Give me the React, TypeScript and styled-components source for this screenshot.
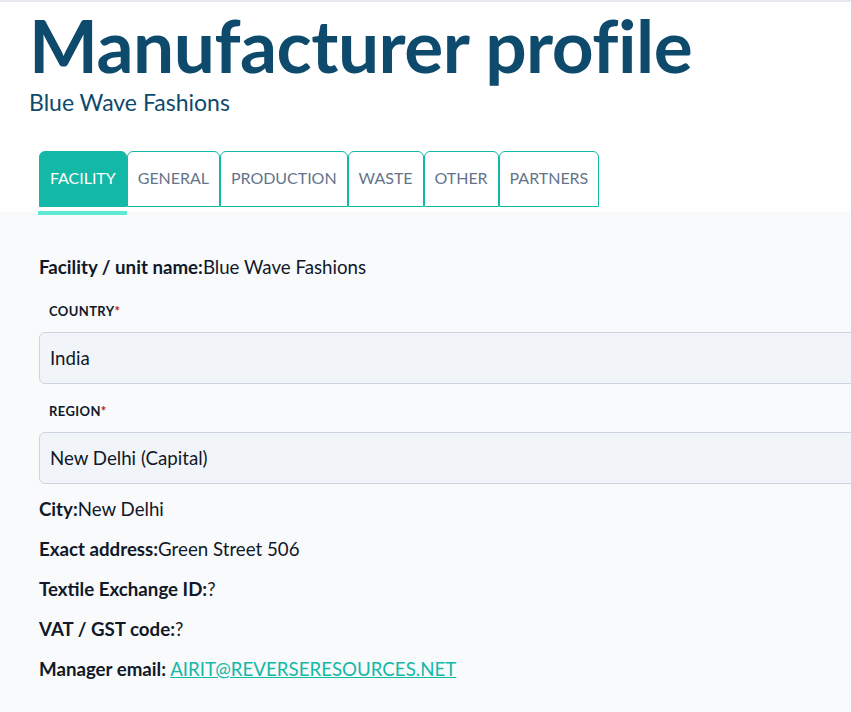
import React from "react";
import styled, { createGlobalStyle } from "styled-components";

const Global = createGlobalStyle`
  html, body { margin: 0; padding: 0; background: #ffffff; overflow: hidden; }
  body { font-family: "Lato", "Noto Sans", sans-serif; }
  * { box-sizing: border-box; }
`;

const Page = styled.div`
  width: 851px;
  min-height: 712px;
  border-top: 2px solid #e6eaf0;
  display: flex;
  flex-direction: column;
  overflow: hidden;
`;

const Header = styled.header`
  padding: 3px 0 0 29px;
`;

const Title = styled.h1`
  margin: 0;
  font-size: 73px;
  line-height: 80px;
  font-weight: 700;
  color: #0e4a6c;
  letter-spacing: -0.5px;
`;

const Subtitle = styled.div`
  font-size: 23px;
  line-height: 26px;
  color: #0e4a6c;
  margin-top: 4px;
`;

const TabBar = styled.nav`
  display: flex;
  padding: 36px 0 0 39px;
`;

const TabWrap = styled.div`
  display: flex;
  flex-direction: column;
`;

const Tab = styled.button<{ $active?: boolean }>`
  height: 56px;
  padding: 0 10px 3px;
  border: 1px solid #14b8a6;
  border-radius: 6px 6px 0 0;
  background: ${(p) => (p.$active ? "#14b8a6" : "#ffffff")};
  color: ${(p) => (p.$active ? "#ffffff" : "#64748b")};
  font-family: inherit;
  font-size: 16px;
  letter-spacing: -0.03px;
  text-transform: uppercase;
  cursor: pointer;
`;

const Underline = styled.div<{ $active?: boolean }>`
  position: relative;
  z-index: 1;
  height: 4px;
  margin: 4px 0 0 -1px;
  background: ${(p) => (p.$active ? "#5ee9d4" : "transparent")};
`;

const Panel = styled.main`
  flex: 1;
  background: #f8fafc;
  margin-top: -3px;
  padding: 43px 0 20px 39px;
  overflow: hidden;
`;

const Line = styled.div`
  font-size: 18.7px;
  line-height: 24px;
  color: #111827;
  margin-bottom: 16px;
`;

const Key = styled.b`
  font-weight: 700;
`;

const Field = styled.div`
  margin: 23px 0 0;
  & + & {
    margin-top: 18px;
  }
`;

const Label = styled.div`
  padding-left: 10px;
  font-size: 13px;
  font-weight: 700;
  letter-spacing: 0.4px;
  text-transform: uppercase;
  color: #111827;
  line-height: 18px;
`;

const Req = styled.span`
  color: #b91c1c;
`;

const Input = styled.div`
  margin-top: 12px;
  margin-right: -20px;
  height: 52px;
  border: 1px solid #cbd5e1;
  border-radius: 6px;
  background: #f1f5f9;
  display: flex;
  align-items: center;
  padding-left: 10px;
  font-size: 18.7px;
  color: #111827;
  margin-bottom: 13px;
`;

const Link = styled.a`
  color: #14b8a6;
  text-decoration: underline;
`;

const tabs = ["Facility", "General", "Production", "Waste", "Other", "Partners"];

export default function App() {
  return (
    <>
      <Global />
      <Page>
        <Header>
          <Title>Manufacturer profile</Title>
          <Subtitle>Blue Wave Fashions</Subtitle>
        </Header>
        <TabBar>
          {tabs.map((t, i) => (
            <TabWrap key={t}>
              <Tab $active={i === 0}>{t}</Tab>
              <Underline $active={i === 0} />
            </TabWrap>
          ))}
        </TabBar>
        <Panel>
          <Line>
            <Key>Facility / unit name:</Key>Blue Wave Fashions
          </Line>
          <Field>
            <Label>
              Country<Req>*</Req>
            </Label>
            <Input>India</Input>
          </Field>
          <Field>
            <Label>
              Region<Req>*</Req>
            </Label>
            <Input>New Delhi (Capital)</Input>
          </Field>
          <Line>
            <Key>City:</Key>New Delhi
          </Line>
          <Line>
            <Key>Exact address:</Key>Green Street 506
          </Line>
          <Line>
            <Key>Textile Exchange ID:</Key>?
          </Line>
          <Line>
            <Key>VAT / GST code:</Key>?
          </Line>
          <Line>
            <Key>Manager email:</Key> <Link href="#">AIRIT@REVERSERESOURCES.NET</Link>
          </Line>
        </Panel>
      </Page>
    </>
  );
}
